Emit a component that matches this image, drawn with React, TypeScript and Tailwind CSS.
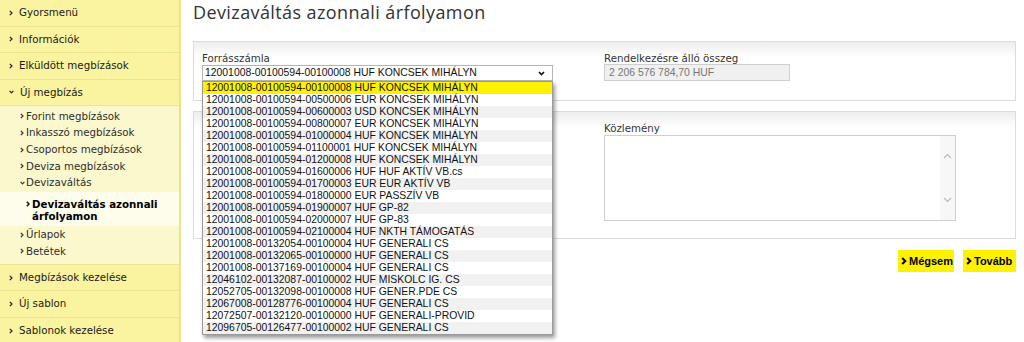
import React from "react";

const items = [
  "12001008-00100594-00100008 HUF KONCSEK MIHÁLYN",
  "12001008-00100594-00500006 EUR KONCSEK MIHÁLYN",
  "12001008-00100594-00600003 USD KONCSEK MIHÁLYN",
  "12001008-00100594-00800007 EUR KONCSEK MIHÁLYN",
  "12001008-00100594-01000004 HUF KONCSEK MIHÁLYN",
  "12001008-00100594-01100001 HUF KONCSEK MIHÁLYN",
  "12001008-00100594-01200008 HUF KONCSEK MIHÁLYN",
  "12001008-00100594-01600006 HUF HUF AKTÍV VB.cs",
  "12001008-00100594-01700003 EUR EUR AKTÍV VB",
  "12001008-00100594-01800000 EUR PASSZÍV VB",
  "12001008-00100594-01900007 HUF GP-82",
  "12001008-00100594-02000007 HUF GP-83",
  "12001008-00100594-02100004 HUF NKTH TÁMOGATÁS",
  "12001008-00132054-00100004 HUF GENERALI CS",
  "12001008-00132065-00100000 HUF GENERALI CS",
  "12001008-00137169-00100004 HUF GENERALI CS",
  "12046102-00132087-00100002 HUF MISKOLC IG. CS",
  "12052705-00132098-00100008 HUF GENER.PDE CS",
  "12067008-00128776-00100004 HUF GENERALI CS",
  "12072507-00132120-00100000 HUF GENERALI-PROVID",
  "12096705-00126477-00100002 HUF GENERALI CS",
];

function RightChev({ color = "#333", bold = false }: { color?: string; bold?: boolean }) {
  return (
    <svg width="4" height="6" viewBox="0 0 4 6" className="shrink-0">
      <path d="M0.8 0.8L3 3L0.8 5.2" fill="none" stroke={color} strokeWidth={bold ? 1.5 : 1.2} />
    </svg>
  );
}

function DownChev({ color = "#333" }: { color?: string }) {
  return (
    <svg width="5" height="4" viewBox="0 0 5 4" className="shrink-0">
      <path d="M0.6 0.8L2.5 2.8L4.4 0.8" fill="none" stroke={color} strokeWidth="1.2" />
    </svg>
  );
}

function MainItem({ label, open = false }: { label: string; open?: boolean }) {
  return (
    <div className="flex h-[26.5px] items-center gap-[6px] border-b border-[#ede48f] pl-[9px] text-[#1a1a1a]">
      {open ? <DownChev color="#222" /> : <RightChev color="#222" />}
      <span>{label}</span>
    </div>
  );
}

function SubItem({ label, open = false }: { label: string; open?: boolean }) {
  return (
    <div className="flex h-[16.7px] items-center gap-[1px] pl-[20px] text-[#2e2e2e]">
      <span className="flex w-[5px] justify-start">{open ? <DownChev color="#333" /> : <RightChev color="#333" />}</span>
      <span>{label}</span>
    </div>
  );
}

function BtnChev() {
  return (
    <svg width="6" height="8" viewBox="0 0 6 8" className="shrink-0">
      <path d="M1.2 1L4.3 4L1.2 7" fill="none" stroke="#000" strokeWidth="2" />
    </svg>
  );
}

export default function App() {
  return (
    <div className="flex h-[342px] w-[1024px] overflow-hidden bg-white font-['DejaVu_Sans',sans-serif] text-[10.25px]">
      <aside className="w-[181px] shrink-0 border-r-2 border-[#ece28a] bg-[#faf39f]">
        <MainItem label="Gyorsmenü" />
        <MainItem label="Információk" />
        <MainItem label="Elküldött megbízások" />
        <MainItem label="Új megbízás" open />
        <div className="border-b border-[#ede48f] bg-[#fcf8cd] pb-[4px] pt-[2px]">
          <SubItem label="Forint megbízások" />
          <SubItem label="Inkasszó megbízások" />
          <SubItem label="Csoportos megbízások" />
          <SubItem label="Deviza megbízások" />
          <SubItem label="Devizaváltás" open />
          <div className="mt-[1px] flex gap-[1px] bg-[#fefdeb] pb-[4px] pl-[26px] pt-[6px] font-bold leading-[12px] text-black">
            <span className="flex h-[12px] w-[5px] items-center">
              <RightChev color="#111" bold />
            </span>
            <span>
              Devizaváltás azonnali
              <br />
              árfolyamon
            </span>
          </div>
          <SubItem label="Űrlapok" />
          <SubItem label="Betétek" />
        </div>
        <MainItem label="Megbízások kezelése" />
        <MainItem label="Új sablon" />
        <MainItem label="Sablonok kezelése" />
      </aside>

      <main className="flex-1 pl-[12px] pr-[8px]">
        <h1 className="h-[41px] font-['Open_Sans',sans-serif] text-[18px] leading-[24px] tracking-[0.4px] text-[#333]">
          Devizaváltás azonnali árfolyamon
        </h1>

        <div className="flex border border-[#dcdcdc] bg-[linear-gradient(to_bottom,#eeeeee,#ffffff_16px)] pb-[19px] pl-[8px] pt-[10px]">
          <div className="w-[402px] shrink-0">
            <div className="leading-[13px] text-[#333]">Forrásszámla</div>
            <div className="relative w-[351px]">
              <div className="flex h-[16px] items-center justify-between border border-[#b5b5b5] bg-white pl-[2px] pr-[7px] font-['Liberation_Sans',Arial,sans-serif] text-[10.4px] text-[#111]">
                <span>12001008-00100594-00100008 HUF KONCSEK MIHÁLYN</span>
                <svg width="7" height="5" viewBox="0 0 7 5">
                  <path d="M1 1L3.5 3.6L6 1" fill="none" stroke="#111" strokeWidth="1.6" />
                </svg>
              </div>
              <div className="absolute left-0 top-full z-10 w-[351px] border border-[#9a9a9a] bg-white font-['Liberation_Sans',Arial,sans-serif] text-[10.4px] text-[#111] shadow-[2px_3px_4px_rgba(0,0,0,0.4)]">
                {items.map((t, i) => (
                  <div
                    key={t}
                    className={
                      i === 0
                        ? "h-[12px] bg-[#fff200] pl-[3px] leading-[12px]"
                        : i % 2 === 0
                        ? "h-[12px] bg-[#f1f1f1] pl-[3px] leading-[12px]"
                        : "h-[12px] bg-white pl-[3px] leading-[12px]"
                    }
                  >
                    {t}
                  </div>
                ))}
              </div>
            </div>
          </div>
          <div>
            <div className="leading-[12px] text-[#333]">Rendelkezésre álló összeg</div>
            <div className="flex h-[17px] w-[186px] items-center border border-[#cfcfcf] bg-[#f0f0f0] pl-[4px] font-['Liberation_Sans',Arial,sans-serif] text-[10.4px] text-[#777]">
              2 206 576 784,70 HUF
            </div>
          </div>
        </div>

        <div className="mt-[10px] flex border border-[#dcdcdc] bg-[linear-gradient(to_bottom,#eeeeee,#ffffff_16px)] pb-[17px] pl-[8px] pt-[10px]">
          <div className="w-[402px] shrink-0" />
          <div>
            <div className="leading-[13px] text-[#333]">Közlemény</div>
            <div className="flex h-[86px] w-[352px] justify-end border border-[#cfcfcf] bg-white">
              <div className="flex w-[15px] flex-col items-center justify-between bg-[#f7f7f7] pb-[17px] pt-[17px]">
                <svg width="9" height="6" viewBox="0 0 9 6">
                  <path d="M1 5L4.5 1.5L8 5" fill="none" stroke="#b8b8b8" strokeWidth="1.1" />
                </svg>
                <svg width="9" height="6" viewBox="0 0 9 6">
                  <path d="M1 1L4.5 4.5L8 1" fill="none" stroke="#b8b8b8" strokeWidth="1.1" />
                </svg>
              </div>
            </div>
          </div>
        </div>

        <div className="mt-[11px] flex justify-end gap-[9px] font-['Liberation_Sans',Arial,sans-serif] text-[11px] font-bold text-black">
          <div className="flex h-[22px] w-[56px] items-center gap-[2px] bg-[#fff200] pl-[3px]">
            <BtnChev />
            <span>Mégsem</span>
          </div>
          <div className="flex h-[22px] w-[53px] items-center gap-[2px] bg-[#fff200] pl-[3px]">
            <BtnChev />
            <span>Tovább</span>
          </div>
        </div>
      </main>
    </div>
  );
}
